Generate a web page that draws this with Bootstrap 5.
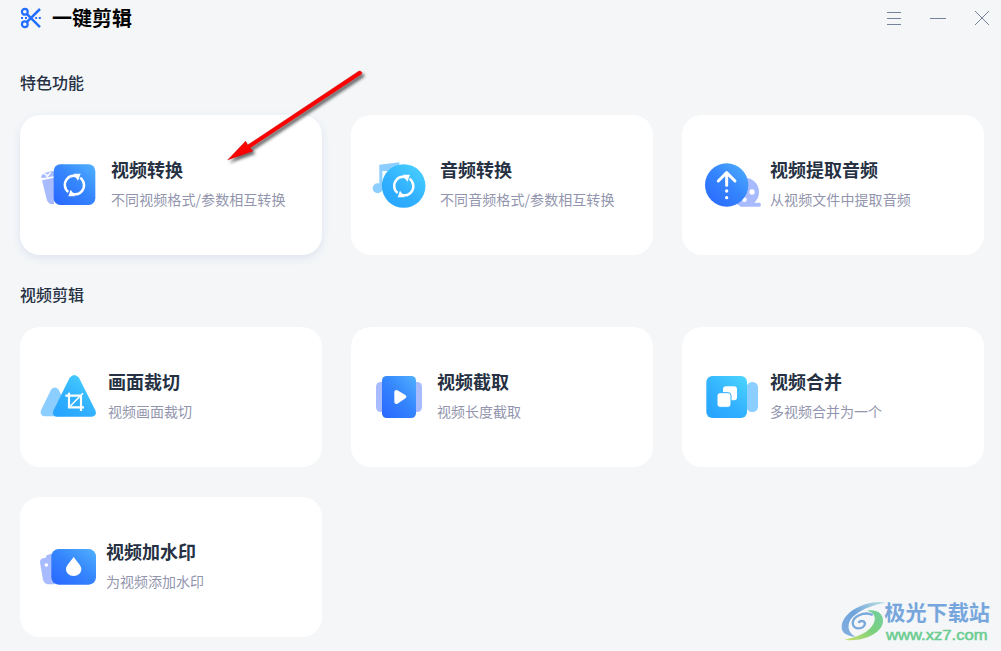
<!DOCTYPE html>
<html lang="zh-CN">
<head>
<meta charset="utf-8">
<meta name="viewport" content="width=device-width, initial-scale=1">
<title>一键剪辑</title>
<link href="https://cdn.jsdelivr.net/npm/bootstrap@5.3.0/dist/css/bootstrap.min.css" rel="stylesheet">
<style>
body{background:#f4f6f8;font-family:"Noto Sans CJK SC",sans-serif;height:651px;overflow:hidden;color:#263143}
.topbar{height:35px;padding:0 11px 0 20px}
.app-name{font-size:20px;line-height:34px;font-weight:700;color:#000;margin-left:10px}
.win-tools{gap:28px;color:#75849c;padding-top:1px}
.content{padding:35px 0 0 20px}
.section-title{font-size:16px;line-height:24px;font-weight:500;margin:0 0 21px;color:#263143}
.tiles{display:grid;grid-template-columns:repeat(3,302px);column-gap:29px;row-gap:30px}
.tiles + .section-title{margin-top:27px}
.tile{height:140px;border:0;border-radius:20px;background:#fff;padding-left:10px}
.tile.active{box-shadow:0 3px 9px rgba(75,105,185,.12)}
.tile svg{flex:none}
.tile-text{padding-bottom:2px}
.tile h3{font-size:18px;line-height:30px;font-weight:700;margin:0;color:#263143}
.tile p{font-size:14px;line-height:30px;margin:0;color:#9295ad;font-weight:400;white-space:nowrap}
.tile .wide{letter-spacing:.08px}
.arrow-mark{left:220px;top:60px}
.site-mark{left:830px;top:590px}
</style>
</head>
<body class="position-relative">
<svg width="0" height="0" class="position-absolute" aria-hidden="true">
<defs>
<linearGradient id="blue" x1="1" y1="0" x2=".1" y2="1"><stop stop-color="#50b1ff"/><stop offset=".5" stop-color="#3585fd"/><stop offset="1" stop-color="#2a69ff"/></linearGradient>
<linearGradient id="cyan" x1="1" y1="0" x2=".2" y2="1"><stop stop-color="#4cd6fe"/><stop offset=".6" stop-color="#32b1ff"/><stop offset="1" stop-color="#27a5ff"/></linearGradient>
<linearGradient id="swirl" x1="0" y1="1" x2="1" y2="0"><stop stop-color="#cfdf6c"/><stop offset=".5" stop-color="#7bd07c"/><stop offset="1" stop-color="#70cfa0"/></linearGradient>
<linearGradient id="swirl2" x1="0" y1="1" x2="1" y2="0"><stop stop-color="#86b0e0"/><stop offset=".5" stop-color="#6ea3dd"/><stop offset="1" stop-color="#c0e6df"/></linearGradient>
<g id="cycle"><path d="M115 126C103 117 101 99 111 87C118 78 128 75 140 79M151 83C164 94 166 112 155 124C148 132 137 135 126 131" fill="none" stroke="#fff" stroke-width="7.5"/><path d="M130 71H152L144 92ZM136 139H115L122 119Z" fill="#fff"/></g>
</defs>
</svg>

<header class="topbar d-flex align-items-center justify-content-between">
<div class="d-flex align-items-center">
<svg width="22" height="22" viewBox="0 0 22 22" fill="none" stroke="#246fff" stroke-width="2.2"><circle cx="4.8" cy="4.8" r="2.9"/><circle cx="4.8" cy="17.2" r="2.9"/><path d="M7 7.2L20 20.2M7 14.8L20 2" stroke-width="2.5"/><path d="M1 11h2M5 11h2M15.3 11h1.8M18.8 11h2" stroke-width="1.8"/></svg>
<span class="app-name">一键剪辑</span>
</div>
<div class="win-tools d-flex align-items-center">
<svg width="16" height="16" stroke="currentColor"><path d="M1 2.5H15M1 8.5H15M1 14.5H15"/></svg>
<svg width="16" height="16" stroke="currentColor"><path d="M0 8.5H16"/></svg>
<svg width="16" height="16" stroke="currentColor"><path d="M1 1L15 15M15 1L1 15"/></svg>
</div>
</header>

<main class="content">
<h2 class="section-title">特色功能</h2>
<div class="tiles">
<div class="tile active d-flex align-items-center">
<svg width="75" height="70" viewBox="0 0 225 210"><path d="M36 91L72 83V162H64Q54 162 50 148Z" fill="#a8bbff"/><path d="M35 85Q31 76 43 69L67 63Q74 62 72 79Z" fill="#a8bbff"/><path d="M41 70L53 77M50 81L62 67" stroke="#fff" stroke-width="4"/><rect x="71" y="43" width="125" height="122" rx="20" fill="url(#blue)"/><use href="#cycle"/></svg>
<div class="tile-text" style="margin-left:6px"><h3>视频转换</h3><p class="wide">不同视频格式/参数相互转换</p></div>
</div>
<div class="tile d-flex align-items-center" style="padding-left:9px">
<svg width="75" height="70" viewBox="0 0 225 210"><path d="M58 44L118 37V63H67V115H58Z" fill="#8bceff"/><circle cx="53" cy="115" r="15" fill="#8bceff"/><circle cx="131" cy="108" r="65.500" fill="url(#cyan)"/><use href="#cycle" x="-2" y="3"/></svg>
<div class="tile-text" style="margin-left:5px"><h3>音频转换</h3><p class="wide">不同音频格式/参数相互转换</p></div>
</div>
<div class="tile d-flex align-items-center" style="padding-left:13px">
<svg width="75" height="70" viewBox="0 0 225 210"><circle cx="149" cy="126" r="43" fill="#a8bbff"/><path d="M135 158H193Q198 159 198 164Q198 169 193 170H135Z" fill="#a8bbff"/><circle cx="171" cy="126" r="8" fill="#fff"/><circle cx="148" cy="149" r="7" fill="#fff"/><circle cx="95" cy="105" r="65" fill="url(#blue)"/><path d="M95 69V106M70 93L95 68L120 93" fill="none" stroke="#fff" stroke-width="9" stroke-linecap="round" stroke-linejoin="round"/><circle cx="95" cy="123" r="5" fill="#fff"/><circle cx="95" cy="143" r="5" fill="#fff"/></svg>
<div class="tile-text"><h3>视频提取音频</h3><p class="wide">从视频文件中提取音频</p></div>
</div>
</div>
<h2 class="section-title">视频剪辑</h2>
<div class="tiles">
<div class="tile d-flex align-items-center">
<svg width="75" height="70" viewBox="0 0 225 210"><path d="M63 83Q74 70 86 83L117 143Q121 162 103 163H42Q29 160 33 145Z" fill="#8bceff"/><path d="M119 47Q133 31 147 47L196 145Q202 161 187 164H79Q65 160 70 146Z" fill="url(#cyan)"/><path d="M117 92V136H162M106 101H153V147" fill="none" stroke="#fff" stroke-width="6.500"/><path d="M121 132L159 94" stroke="#fff" stroke-width="4.500"/></svg>
<div class="tile-text" style="margin-left:3px"><h3>画面裁切</h3><p>视频画面裁切</p></div>
</div>
<div class="tile d-flex align-items-center" style="padding-left:9px">
<svg width="75" height="70" viewBox="0 0 225 210"><rect x="48" y="60" width="138" height="90" rx="14" fill="#a8bbff"/><rect x="66" y="42" width="102" height="126" rx="14" fill="url(#blue)"/><path d="M109 90L133 104L109 120Z" fill="#fff" stroke="#fff" stroke-width="12" stroke-linejoin="round"/></svg>
<div class="tile-text" style="margin-left:2px"><h3>视频截取</h3><p>视频长度截取</p></div>
</div>
<div class="tile d-flex align-items-center" style="padding-left:13px">
<svg width="75" height="70" viewBox="0 0 225 210"><rect x="155" y="60" width="34" height="90" rx="16" fill="#8bceff"/><rect x="34" y="42" width="122" height="126" rx="18" fill="url(#cyan)"/><rect x="84" y="73" width="42" height="42" rx="9" fill="#fff"/><rect x="66" y="92" width="42" height="44" rx="9" fill="#fff" stroke="#31afff" stroke-width="3"/></svg>
<div class="tile-text"><h3>视频合并</h3><p>多视频合并为一个</p></div>
</div>
<div class="tile d-flex align-items-center">
<svg width="75" height="70" viewBox="0 0 225 210"><path d="M30 91Q30 81 39 79L47 77L50 70L63 65L75 80V157H59Q43 157 39 143Z" fill="#a8bbff"/><circle cx="49" cy="99" r="5.500" fill="#fff"/><rect x="64" y="51" width="134" height="107" rx="22" fill="url(#blue)"/><path d="M131 74C139 88 154 99 154 111C154 123 144 132 131 132C118 132 108 123 108 111C108 99 123 88 131 74Z" fill="#fff"/></svg>
<div class="tile-text" style="margin-left:1px"><h3>视频加水印</h3><p>为视频添加水印</p></div>
</div>
</div>
</main>

<svg class="arrow-mark position-absolute" width="150" height="110" viewBox="0 0 450 330"><defs><filter id="shade" x="-10%" y="-10%" width="125%" height="125%"><feDropShadow dx="7" dy="8" stdDeviation="5" flood-color="#000" flood-opacity=".6"/></filter></defs><g filter="url(#shade)"><path d="M417 33Q424 32 426 38L424 43L90 264L99 273L23 300L77 243L83 255Z" fill="#fd0000" stroke="#a31212" stroke-width="1"/></g></svg>

<svg class="site-mark position-absolute" width="171" height="61" viewBox="0 0 513 183">
<path d="M169 38C111 27 35 66 35 112C35 128 48 138 78 141C48 126 50 93 75 75C98 56 132 43 169 38Z" fill="url(#swirl2)"/>
<path d="M112 62C134 68 140 84 130 102C117 125 91 139 44 149C91 158 157 133 159 94C160 69 137 57 112 62Z" fill="url(#swirl)"/>
<path d="M128 75C102 63 69 79 68 99C69 121 103 119 105 101C104 91 91 91 85 98" fill="none" stroke="#78a8dc" stroke-width="7"/>
<text x="163" y="91" font-family="Noto Sans CJK SC,sans-serif" font-size="63" font-weight="700" fill="#76a6dc" textLength="317" lengthAdjust="spacingAndGlyphs">极光下载站</text>
<text x="168" y="149" font-family="Liberation Sans,sans-serif" font-size="42" fill="#6bcd91" stroke="#6bcd91" stroke-width="1.5" textLength="305" lengthAdjust="spacingAndGlyphs">www.xz7.com</text>
</svg>
<script src="https://cdn.jsdelivr.net/npm/bootstrap@5.3.0/dist/js/bootstrap.bundle.min.js"></script>
</body>
</html>
